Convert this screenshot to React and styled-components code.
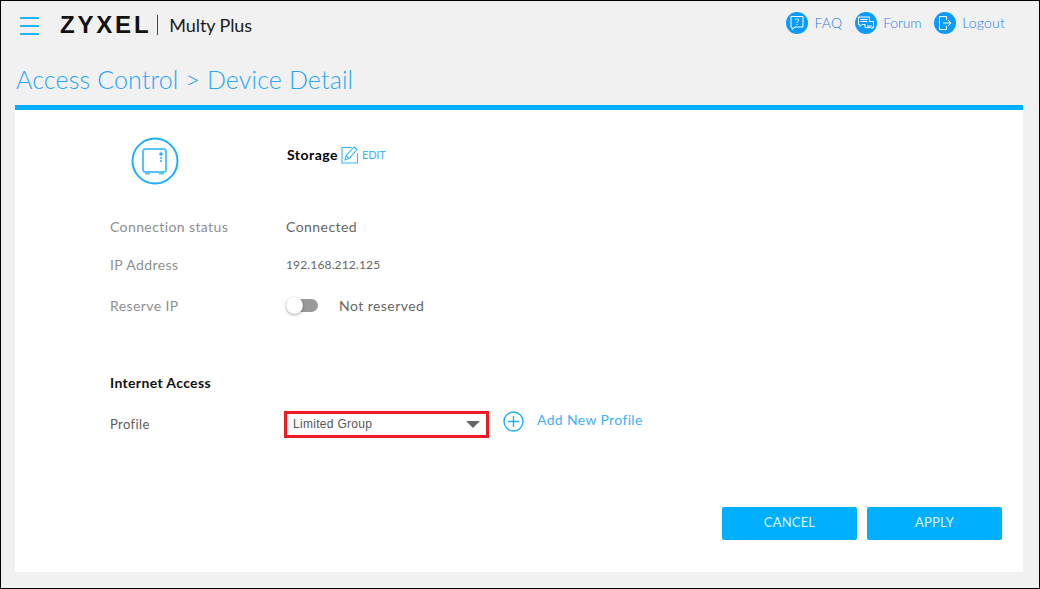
import React from 'react'
import styled, { createGlobalStyle } from 'styled-components'

const blue = '#00b0ff'

const Global = createGlobalStyle`
  html, body { margin: 0; padding: 0; }
  body { font-family: "Lato", "Open Sans", sans-serif; }
`

const Page = styled.div`
  box-sizing: border-box;
  width: 1040px;
  height: 589px;
  border: 1px solid #000;
  background: #f1f1f1;
  padding: 0 16px 16px 14px;
  display: flex;
  flex-direction: column;
  overflow: hidden;
`

const Header = styled.header`
  display: flex;
  align-items: center;
  height: 45px;
  padding-left: 5px;
`

const Burger = styled.div`
  width: 19px;
  height: 18px;
  margin-top: 5px;
  display: flex;
  flex-direction: column;
  justify-content: space-between;
  span { display: block; height: 2px; background: #22b4fb; }
`

const Logo = styled.div`
  margin-left: 21px;
  margin-top: 3px;
  font-family: "Liberation Sans", sans-serif;
  font-weight: 700;
  font-size: 24px;
  line-height: 24px;
  letter-spacing: 2.8px;
  color: #111;
`

const LogoBar = styled.div`
  width: 1px;
  height: 20px;
  margin: 3px 0 0 6px;
  background: #444;
`

const Product = styled.div`
  margin: 3px 0 0 11px;
  font-size: 18px;
  font-weight: 400;
  color: #1b1b1b;
  letter-spacing: -0.1px;
`

const Links = styled.nav`
  margin: -2px 18px 0 auto;
  display: flex;
  gap: 13px;
  align-items: center;
`

const TopLink = styled.a`
  display: flex;
  align-items: center;
  gap: 6px;
  font-size: 14px;
  font-weight: 300;
  letter-spacing: ${p => (p.$tight ? -0.2 : 0.2)}px;
  color: #2f7df0;
`

const Badge = styled.span`
  width: 22px;
  height: 22px;
  border-radius: 50%;
  background: #0a9bff;
  display: flex;
  align-items: center;
  justify-content: center;
`

const Title = styled.h1`
  margin: 0;
  height: 59px;
  padding: 17px 0 0 1px;
  box-sizing: border-box;
  font-size: 25px;
  line-height: 32px;
  font-weight: 300;
  letter-spacing: 0.13px;
  color: #2aa5f5;
`

const Panel = styled.main`
  flex: 1;
  background: #fff;
  border-top: 5px solid ${blue};
  padding: 22px 21px 0 95px;
  display: flex;
  flex-direction: column;
`

const Row = styled.div`
  display: grid;
  grid-template-columns: 176px 1fr;
  align-items: center;
  height: ${p => p.$h}px;
  margin-top: ${p => p.$top || 0}px;
`

const Label = styled.div`
  font-size: ${p => p.$size || 14}px;
  font-weight: 400;
  letter-spacing: 0.4px;
  color: ${p => (p.$dark ? '#5c5c5c' : '#8f8f8f')};
`

const Value = styled.div`
  font-size: ${p => p.$size || 14}px;
  letter-spacing: ${p => (p.$size ? 0.15 : 0.45)}px;
  color: #666;
`

const Device = styled.div`
  width: 48px;
  height: 48px;
  margin-left: 21px;
`

const NameCell = styled.div`
  display: flex;
  align-items: center;
  margin-top: -14px;
`

const Name = styled.span`
  font-size: 14px;
  font-weight: 700;
  letter-spacing: 0.5px;
  margin-left: 1px;
  color: #000;
`

const Edit = styled.span`
  display: flex;
  align-items: center;
  gap: 2px;
  margin-left: 3px;
  font-size: 11px;
  color: #3cb4f5;
  letter-spacing: -0.2px;
`

const SwitchCell = styled.div`
  display: flex;
  align-items: center;
  gap: 21px;
`

const Track = styled.div`
  position: relative;
  width: 32px;
  height: 13px;
  border-radius: 7px;
  background: #999;
`

const Knob = styled.div`
  position: absolute;
  left: 0;
  top: -2px;
  width: 17px;
  height: 17px;
  border-radius: 50%;
  background: #fff;
  box-shadow: 0 1px 3px rgba(0, 0, 0, 0.35);
`

const Section = styled.div`
  margin-top: 37px;
  height: 36px;
  font-size: 14px;
  font-weight: 700;
  letter-spacing: 0.35px;
  color: #111;
  display: flex;
  align-items: center;
`

const ProfileCell = styled.div`
  display: flex;
  align-items: center;
  margin-left: -2px;
`

const Select = styled.div`
  box-sizing: border-box;
  width: 205px;
  height: 27px;
  border: 3px solid #ed1c24;
  padding: 0 6px;
  display: flex;
  align-items: center;
  justify-content: space-between;
  font-family: "Liberation Sans", sans-serif;
  font-size: 12px;
  letter-spacing: 0.3px;
  color: #555;
`

const Caret = styled.span`
  width: 0;
  height: 0;
  border-left: 7px solid transparent;
  border-right: 7px solid transparent;
  border-top: 7px solid #666;
`

const AddProfile = styled.a`
  display: flex;
  align-items: center;
  gap: 13px;
  margin: -6px 0 0 14px;
  font-size: 14px;
  letter-spacing: 0.35px;
  color: #3fb0f5;
  span { margin-top: -3px; }
`

const Actions = styled.div`
  display: flex;
  justify-content: flex-end;
  gap: 10px;
  margin-top: 61px;
`

const Button = styled.button`
  width: 135px;
  height: 33px;
  border: 0;
  border-radius: 2px;
  background: ${blue};
  font-family: inherit;
  font-size: 13px;
  font-weight: 400;
  letter-spacing: 0.2px;
  color: #d8f3ff;
  padding: 0 0 4px;
`

const Faq = () => (
  <svg width="16" height="16" viewBox="0 0 16 16" fill="none" stroke="#fff" strokeWidth="1">
    <path d="M2 1.5h12v10.5H6l-3 2.5v-2.5H2z" />
    <path d="M6.6 5.2c0-2 3-2 3 0 0 1.2-1.5 1.2-1.5 2.6M8.1 9v1" />
  </svg>
)

const Forum = () => (
  <svg width="18" height="16" viewBox="0 0 18 16" fill="none" stroke="#fff" strokeWidth="1">
    <path d="M1.5 2h11v7.5H5l-2 2v-2H1.5z" />
    <path d="M3.5 4.5h7M3.5 6.5h7" />
    <path d="M8 9.5v3h5.5l1.5 1.5v-1.5h1.5V6.5h-4" fill="#0a9bff" />
    <path d="M10 11h5" />
  </svg>
)

const Logout = () => (
  <svg width="16" height="16" viewBox="0 0 16 16" fill="none" stroke="#fff" strokeWidth="1">
    <path d="M9.5 5V1.5h-7v13h7V11" />
    <path d="M6 8h8M11 5l3 3-3 3" />
  </svg>
)

const StorageIcon = () => (
  <svg width="48" height="48" viewBox="0 0 48 48" fill="none">
    <circle cx="24" cy="24" r="22.5" stroke="#1cb0fb" strokeWidth="2" />
    <rect x="12" y="12" width="23" height="23" rx="2.5" stroke="#55c4fb" strokeWidth="2" />
    <path d="M14 36h5v1.5h-5zM28 36h5v1.5h-5z" fill="#55c4fb" />
    <circle cx="30" cy="17" r="1.8" fill="#1cb0fb" />
    <circle cx="30" cy="21" r="1" fill="#1cb0fb" />
    <circle cx="30" cy="24" r="1" fill="#1cb0fb" />
  </svg>
)

const EditIcon = () => (
  <svg width="19" height="19" viewBox="0 0 19 19" fill="none" stroke="#35b5fa" strokeWidth="1.1">
    <path d="M11 2.5H1V18h15.5V8" />
    <path d="M4 15l1-4 8-9 3 2.6-8 9z" />
    <path d="M5 11l3 2.6" />
  </svg>
)

const PlusIcon = () => (
  <svg width="21" height="21" viewBox="0 0 21 21" fill="none" stroke="#1cb0fb" strokeWidth="1.4">
    <circle cx="10.5" cy="10.5" r="9.5" />
    <path d="M10.5 5v11M5 10.5h11" />
  </svg>
)

export default function App() {
  return (
    <Page>
      <Global />
      <Header>
        <Burger><span /><span /><span /></Burger>
        <Logo>ZYXEL</Logo>
        <LogoBar />
        <Product>Multy Plus</Product>
        <Links>
          <TopLink><Badge><Faq /></Badge>FAQ</TopLink>
          <TopLink $tight><Badge><Forum /></Badge>Forum</TopLink>
          <TopLink><Badge><Logout /></Badge>Logout</TopLink>
        </Links>
      </Header>
      <Title>Access Control &gt; Device Detail</Title>
      <Panel>
        <Row $h={58}>
          <Device><StorageIcon /></Device>
          <NameCell>
            <Name>Storage</Name>
            <Edit><EditIcon />EDIT</Edit>
          </NameCell>
        </Row>
        <Row $h={38} $top={17}>
          <Label>Connection status</Label>
          <Value>Connected</Value>
        </Row>
        <Row $h={38}>
          <Label>IP Address</Label>
          <Value $size={12}>192.168.212.125</Value>
        </Row>
        <Row $h={44}>
          <Label>Reserve IP</Label>
          <SwitchCell>
            <Track><Knob /></Track>
            <Value>Not reserved</Value>
          </SwitchCell>
        </Row>
        <Section>Internet Access</Section>
        <Row $h={44} $top={2}>
          <Label $dark $size={13}>Profile</Label>
          <ProfileCell>
            <Select>Limited Group<Caret /></Select>
            <AddProfile><PlusIcon /><span>Add New Profile</span></AddProfile>
          </ProfileCell>
        </Row>
        <Actions>
          <Button>CANCEL</Button>
          <Button>APPLY</Button>
        </Actions>
      </Panel>
    </Page>
  )
}
